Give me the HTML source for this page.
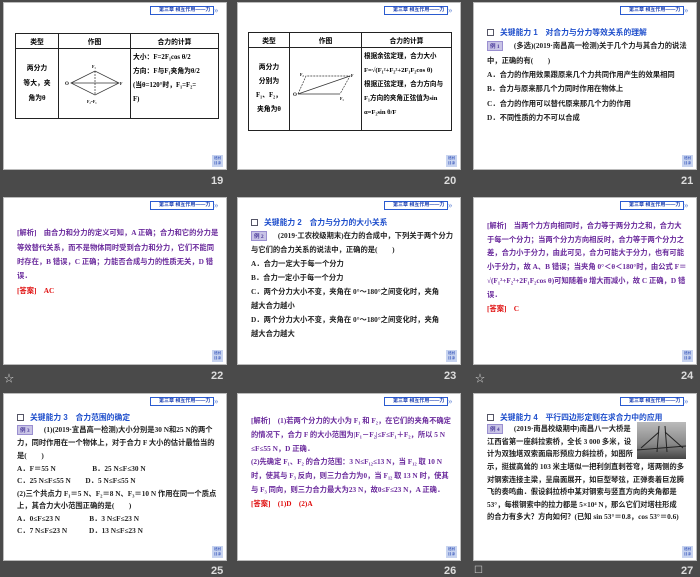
<!DOCTYPE html>
<html><head><meta charset="utf-8"><style>
*{margin:0;padding:0;box-sizing:border-box}
body{width:700px;height:577px;background:#4a4a4a;position:relative;overflow:hidden;font-family:"Liberation Serif","Noto Serif CJK SC","Noto Sans CJK SC",serif}
.s{position:absolute;width:224px;height:168px;background:#fff;border:1px solid #bbb;overflow:hidden}
.tab{position:absolute;left:146px;top:3px;width:64px;height:9px;border:1px solid #2a5bd0;font-size:5px;color:#1c3fb0;font-weight:bold;line-height:7px;padding-left:8px;white-space:nowrap;font-family:"Liberation Sans","Noto Sans CJK SC",sans-serif}
.chev{position:absolute;left:210px;top:2px;font-size:9px;color:#8aa4e0;line-height:10px;font-weight:bold}
.ret{position:absolute;left:208px;top:152px;width:11px;height:12px;background:#c8d4f0;font-size:3.5px;color:#1c3fb0;line-height:5px;text-align:center;font-weight:bold;padding-top:1px}
.n{position:absolute;color:#ddd;font:bold 11px "Liberation Sans",sans-serif}
.st{position:absolute;color:#ccc;font-size:10px}
.l{position:absolute;left:13px;white-space:nowrap;font-size:7.3px;font-weight:bold;color:#222;font-family:"Liberation Serif","Noto Sans CJK SC",serif}
.p{color:#6a2a9c}.r{color:#e01010}.b{color:#1f4fcc}
.h{position:absolute;left:13px;white-space:nowrap;font-size:7.8px;font-weight:bold;color:#1f4fcc;font-family:"Liberation Sans","Noto Sans CJK SC",sans-serif}
.h i{display:inline-block;width:7px;height:7px;border:1.5px solid #556;margin-right:6px;vertical-align:-1px}
.ex{display:inline-block;background:#c9c4e6;color:#4a3a9a;font-size:5.5px;padding:0 2px;margin-right:4px;border:1px solid #9a8fd0}
table{position:absolute;border-collapse:collapse;font-size:6.8px;font-weight:bold;font-family:"Liberation Serif","Noto Sans CJK SC",serif}
td{border:1px solid #222;vertical-align:middle}
</style></head><body>

<div class="s" style="left:3px;top:2px">
<div class="tab">第三章 相互作用——力</div><div class="chev">»</div>
<table style="left:11px;top:30px;width:204px;height:86px">
<tr style="height:15px"><td style="width:43px;text-align:center">类型</td><td style="width:72px;text-align:center">作图</td><td style="text-align:center">合力的计算</td></tr>
<tr><td style="text-align:center;line-height:15px">两分力<br>等大，夹<br>角为θ</td>
<td><svg width="70" height="60" viewBox="0 0 70 60"><g stroke="#333" stroke-width=".7" fill="none"><path d="M12 30 L36 18 L60 30 L36 42 Z"/><path d="M12 30 L60 30"/><path d="M36 18 L36 42" stroke-dasharray="2 1"/></g><text x="6" y="32" font-size="5">O</text><text x="33" y="15" font-size="4">F₁</text><text x="61" y="32" font-size="4">F</text><text x="28" y="50" font-size="4">F₂=F₁</text></svg></td>
<td style="vertical-align:top;padding:2px;line-height:14px;white-space:nowrap">大小：F=2F₁cos θ/2<br>方向：F与F₁夹角为θ/2<br>(当θ=120°时，F₁=F₂=<br>F)</td></tr></table>
<div class="ret">返回<br>目录</div></div>
<div class="n" style="left:211px;top:175px">19</div>

<div class="s" style="left:237px;top:2px">
<div class="tab">第三章 相互作用——力</div><div class="chev">»</div>
<table style="left:10px;top:29px;width:204px;height:96px">
<tr style="height:15px"><td style="width:41px;text-align:center">类型</td><td style="width:72px;text-align:center">作图</td><td style="text-align:center">合力的计算</td></tr>
<tr><td style="text-align:center;line-height:14px">两分力<br>分别为<br>F₁、F₂，<br>夹角为θ</td>
<td><svg width="70" height="80" viewBox="0 0 70 80"><g stroke="#333" stroke-width=".7" fill="none"><path d="M8 46 L50 46"/><path d="M8 46 L16 28 L60 28 L50 46" stroke-dasharray="2 1"/><path d="M8 46 L60 28"/></g><text x="3" y="48" font-size="5">O</text><text x="10" y="28" font-size="4">F₂</text><text x="61" y="29" font-size="4">F</text><text x="50" y="52" font-size="4">F₁</text></svg></td>
<td style="vertical-align:top;padding:2px;line-height:14px;white-space:nowrap;font-size:6.6px">根据余弦定理，合力大小<br>F=√(F₁²+F₂²+2F₁F₂cos θ)<br>根据正弦定理，合力方向与<br>F₁方向的夹角正弦值为sin<br>α=F₂sin θ/F</td></tr></table>
<div class="ret">返回<br>目录</div></div>
<div class="n" style="left:444px;top:175px">20</div>

<div class="s" style="left:473px;top:2px">
<div class="tab">第三章 相互作用——力</div><div class="chev">»</div>
<div class="h" style="top:24px"><i></i>关键能力 1　对合力与分力等效关系的理解</div>
<div class="l" style="top:38px"><span class="ex">例 1</span>　(多选)(2019·南昌高一检测)关于几个力与其合力的说法</div>
<div class="l" style="top:53px">中，正确的有(　　)</div>
<div class="l" style="top:67px">A．合力的作用效果跟原来几个力共同作用产生的效果相同</div>
<div class="l" style="top:81px">B．合力与原来那几个力同时作用在物体上</div>
<div class="l" style="top:96px">C．合力的作用可以替代原来那几个力的作用</div>
<div class="l" style="top:110px">D．不同性质的力不可以合成</div>
<div class="ret">返回<br>目录</div></div>
<div class="n" style="left:681px;top:175px">21</div>

<div class="s" style="left:3px;top:197px">
<div class="tab">第三章 相互作用——力</div><div class="chev">»</div>
<div class="l p" style="top:30px">[解析]　由合力和分力的定义可知，A 正确；合力和它的分力是</div>
<div class="l p" style="top:45px">等效替代关系，而不是物体同时受到合力和分力，它们不能同</div>
<div class="l p" style="top:59px">时存在，B 错误，C 正确；力能否合成与力的性质无关，D 错</div>
<div class="l p" style="top:73px">误．</div>
<div class="l r" style="top:88px">[答案]　AC</div>
<div class="ret">返回<br>目录</div></div>
<div class="st" style="left:4px;top:370px">☆</div>
<div class="n" style="left:211px;top:370px">22</div>

<div class="s" style="left:237px;top:197px">
<div class="tab">第三章 相互作用——力</div><div class="chev">»</div>
<div class="h" style="top:19px"><i></i>关键能力 2　合力与分力的大小关系</div>
<div class="l" style="top:33px"><span class="ex">例 2</span>　(2019·工农校级期末)在力的合成中，下列关于两个分力</div>
<div class="l" style="top:47px">与它们的合力关系的说法中，正确的是(　　)</div>
<div class="l" style="top:61px">A．合力一定大于每一个分力</div>
<div class="l" style="top:75px">B．合力一定小于每一个分力</div>
<div class="l" style="top:89px">C．两个分力大小不变，夹角在 0°～180°之间变化时，夹角</div>
<div class="l" style="top:103px">越大合力越小</div>
<div class="l" style="top:117px">D．两个分力大小不变，夹角在 0°～180°之间变化时，夹角</div>
<div class="l" style="top:131px">越大合力越大</div>
<div class="ret">返回<br>目录</div></div>
<div class="n" style="left:444px;top:370px">23</div>

<div class="s" style="left:473px;top:197px">
<div class="tab">第三章 相互作用——力</div><div class="chev">»</div>
<div class="l p" style="top:23px">[解析]　当两个力方向相同时，合力等于两分力之和，合力大</div>
<div class="l p" style="top:37px">于每一个分力；当两个分力方向相反时，合力等于两个分力之</div>
<div class="l p" style="top:50px">差，合力小于分力，由此可见，合力可能大于分力，也有可能</div>
<div class="l p" style="top:64px">小于分力，故 A、B 错误；当夹角 0°＜θ＜180°时，由公式 F＝</div>
<div class="l p" style="top:78px">√(F₁²+F₂²+2F₁F₂cos θ)可知随着θ 增大而减小，故 C 正确，D 错</div>
<div class="l p" style="top:92px">误．</div>
<div class="l r" style="top:106px">[答案]　C</div>
<div class="ret">返回<br>目录</div></div>
<div class="st" style="left:475px;top:370px">☆</div>
<div class="n" style="left:681px;top:370px">24</div>

<div class="s" style="left:3px;top:393px">
<div class="tab">第三章 相互作用——力</div><div class="chev">»</div>
<div class="h" style="top:18px"><i></i>关键能力 3　合力范围的确定</div>
<div class="l" style="top:31px"><span class="ex">例 3</span>　(1)(2019·宜昌高一检测)大小分别是30 N和25 N的两个</div>
<div class="l" style="top:44px">力，同时作用在一个物体上，对于合力 F 大小的估计最恰当的</div>
<div class="l" style="top:57px">是(　　)</div>
<div class="l" style="top:70px">A．F＝55 N　　　　　B．25 N≤F≤30 N</div>
<div class="l" style="top:82px">C．25 N≤F≤55 N　　D．5 N≤F≤55 N</div>
<div class="l" style="top:95px">(2)三个共点力 F₁＝5 N、F₂＝8 N、F₃＝10 N 作用在同一个质点</div>
<div class="l" style="top:107px">上，其合力大小范围正确的是(　　)</div>
<div class="l" style="top:120px">A．0≤F≤23 N　　　　B．3 N≤F≤23 N</div>
<div class="l" style="top:132px">C．7 N≤F≤23 N　　　D．13 N≤F≤23 N</div>
<div class="ret">返回<br>目录</div></div>
<div class="n" style="left:211px;top:565px">25</div>

<div class="s" style="left:237px;top:393px">
<div class="tab">第三章 相互作用——力</div><div class="chev">»</div>
<div class="l p" style="top:22px">[解析]　(1)若两个分力的大小为 F₁ 和 F₂，在它们的夹角不确定</div>
<div class="l p" style="top:36px">的情况下，合力 F 的大小范围为|F₁－F₂|≤F≤F₁＋F₂，所以 5 N</div>
<div class="l p" style="top:50px">≤F≤55 N，D 正确．</div>
<div class="l p" style="top:63px">(2)先确定 F₁、F₂ 的合力范围：3 N≤F₁₂≤13 N，当 F₁₂ 取 10 N</div>
<div class="l p" style="top:77px">时，使其与 F₃ 反向，则三力合力为0，当 F₁₂ 取 13 N 时，使其</div>
<div class="l p" style="top:91px">与 F₃ 同向，则三力合力最大为23 N，故0≤F≤23 N，A 正确．</div>
<div class="l r" style="top:105px">[答案]　(1)D　(2)A</div>
<div class="ret">返回<br>目录</div></div>
<div class="st" style="left:474px;top:565px">☐</div>
<div class="n" style="left:444px;top:565px">26</div>

<div class="s" style="left:473px;top:393px">
<div class="tab">第三章 相互作用——力</div><div class="chev">»</div>
<div class="h" style="top:18px"><i></i>关键能力 4　平行四边形定则在求合力中的应用</div>
<div style="position:absolute;left:163px;top:28px;width:49px;height:37px;background:linear-gradient(#bbb,#888 60%,#444);"><svg width="49" height="37"><path d="M22 4 L20 30 M28 4 L30 30 M22 10 L4 26 M28 10 L46 26 M0 28 L49 24" stroke="#222" stroke-width="1" fill="none"/></svg></div>
<div class="l" style="top:30px"><span class="ex">例 4</span>　(2019·南昌校级期中)南昌八一大桥是</div>
<div class="l" style="top:43px">江西省第一座斜拉索桥，全长 3 000 多米，设</div>
<div class="l" style="top:55px">计为双独塔双索面扇形预应力斜拉桥，如图所</div>
<div class="l" style="top:68px">示，挺拔高耸的 103 米主塔似一把利剑直刺苍穹，塔两侧的多</div>
<div class="l" style="top:81px">对钢索连接主梁，呈扇面展开，如巨型琴弦，正弹奏着巨龙腾</div>
<div class="l" style="top:93px">飞的奏鸣曲．假设斜拉桥中某对钢索与竖直方向的夹角都是</div>
<div class="l" style="top:106px">53°，每根钢索中的拉力都是 5×10⁴ N，那么它们对塔柱形成</div>
<div class="l" style="top:118px">的合力有多大？方向如何？(已知 sin 53°＝0.8，cos 53°＝0.6)</div>
<div class="ret">返回<br>目录</div></div>
<div class="n" style="left:681px;top:565px">27</div>
</body></html>
